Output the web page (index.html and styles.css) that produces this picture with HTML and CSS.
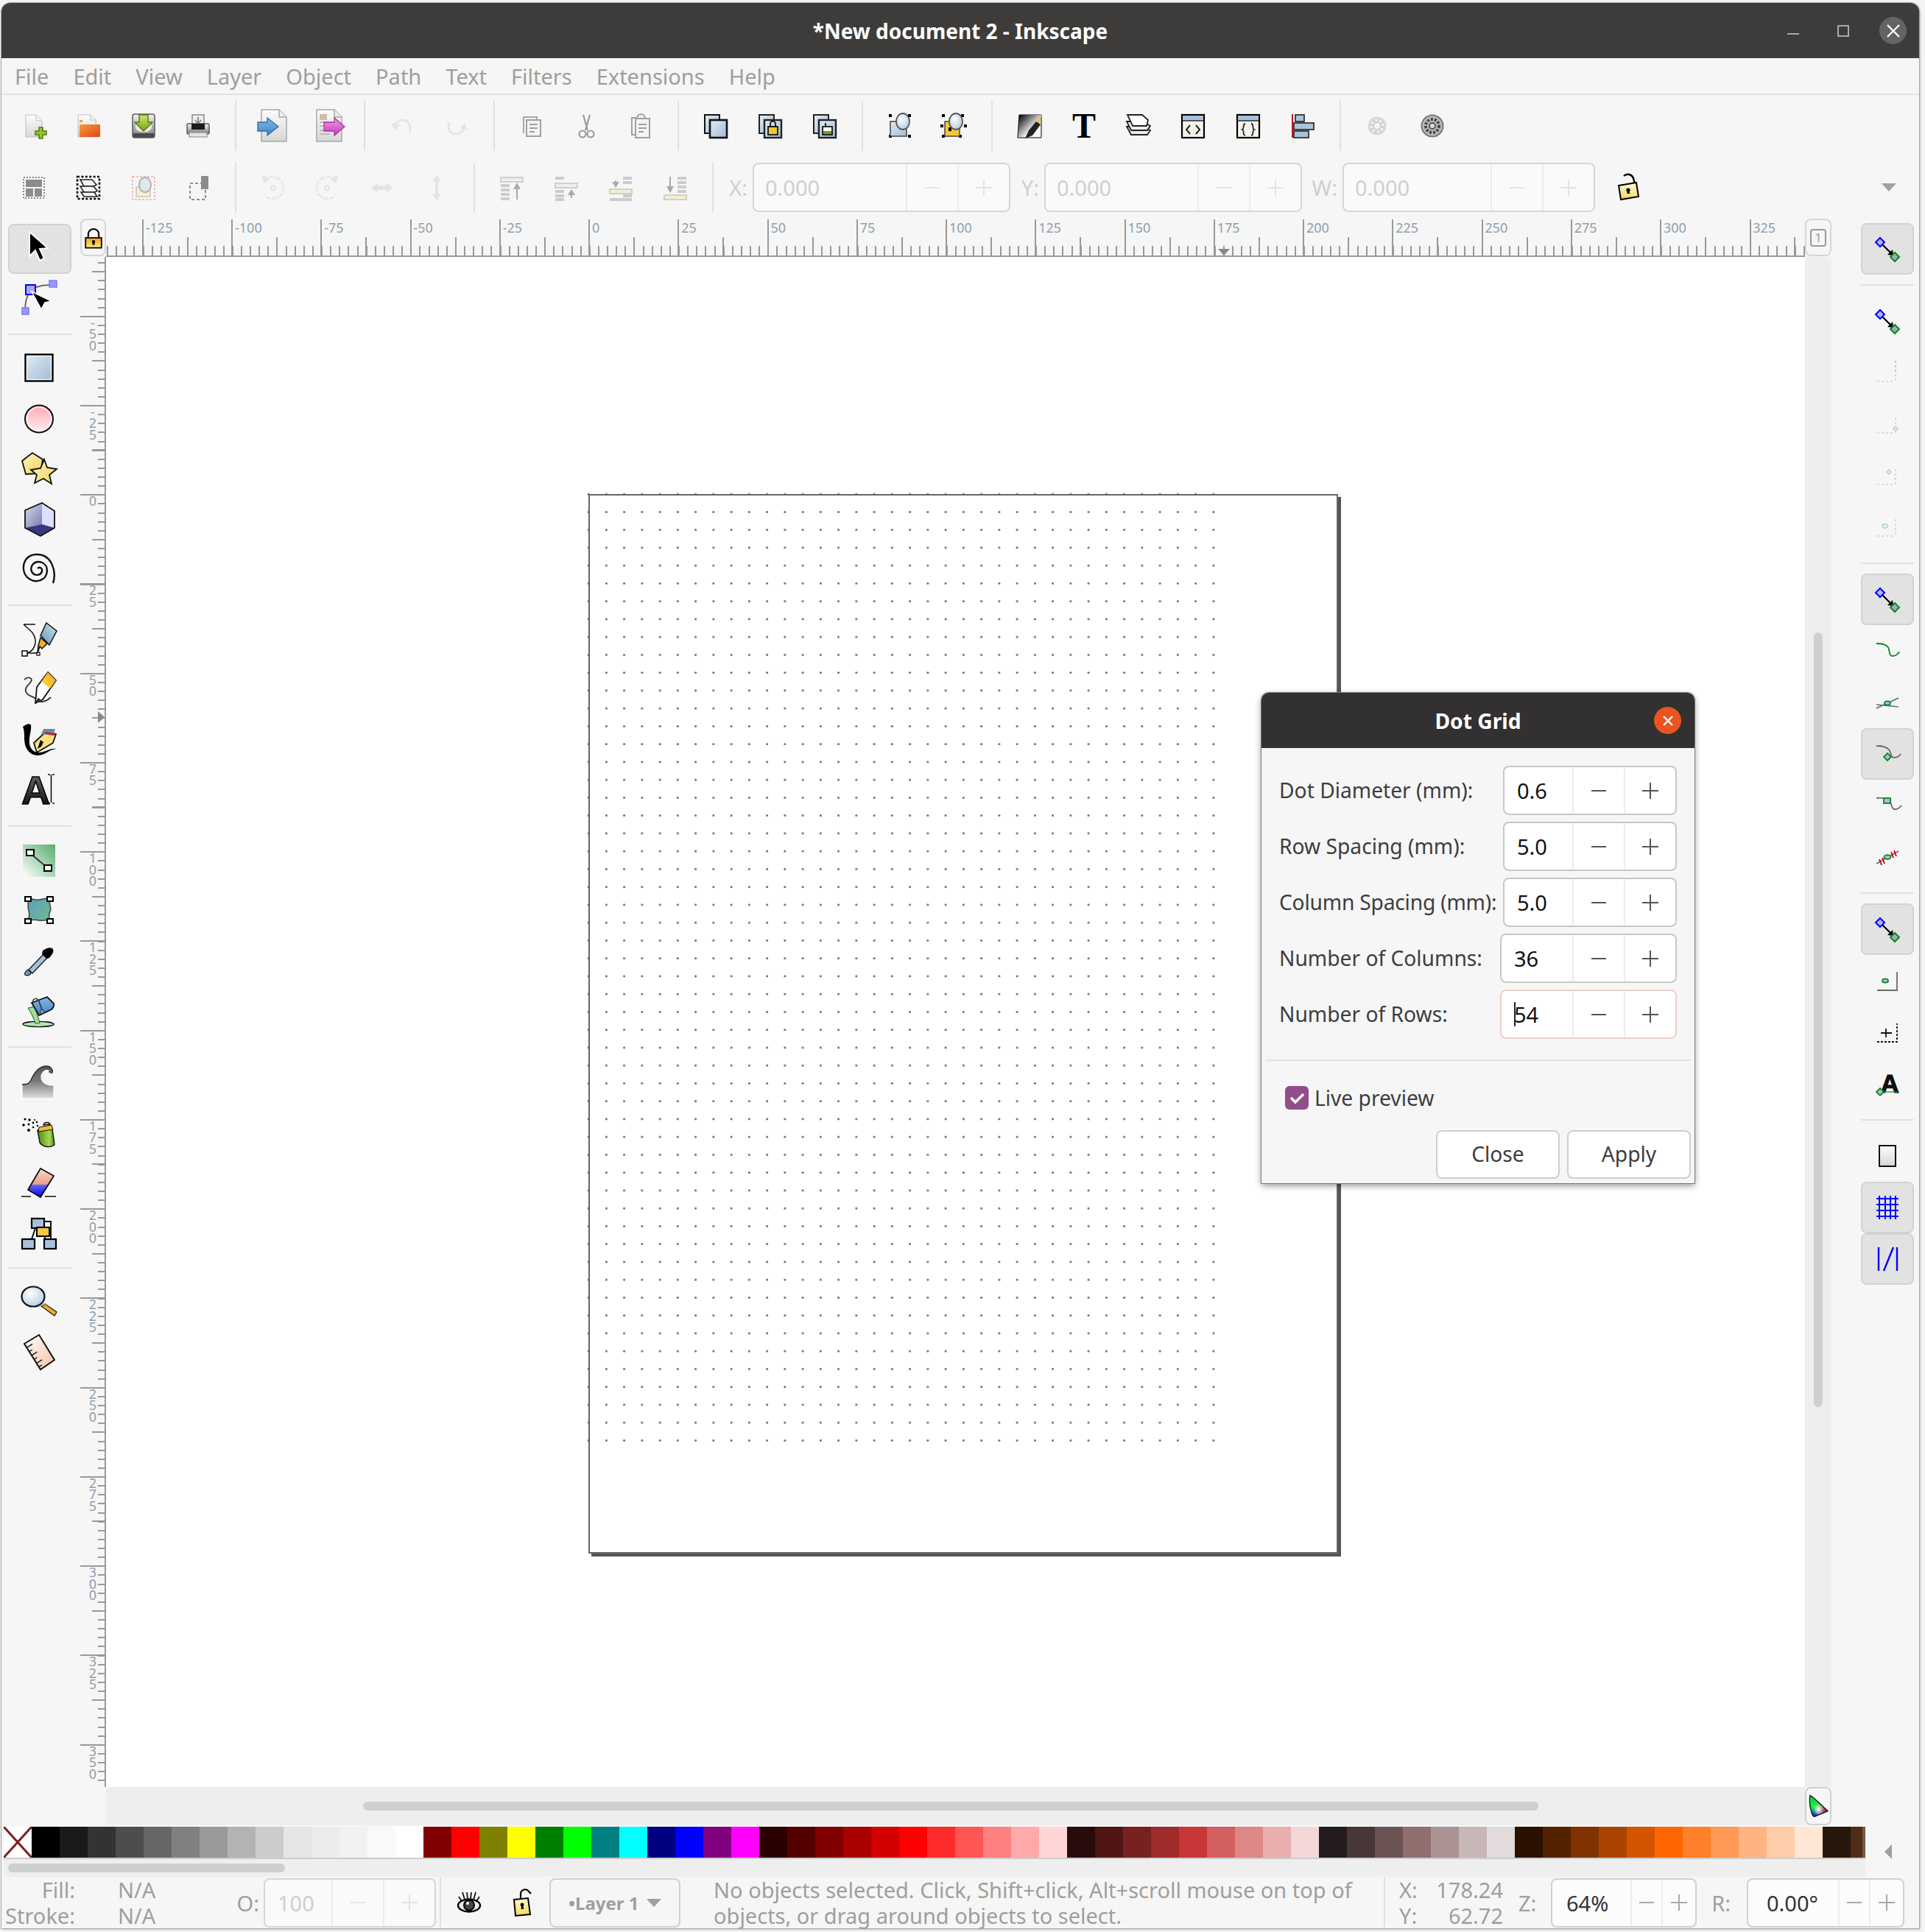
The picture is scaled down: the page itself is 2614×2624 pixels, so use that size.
FILE: index.html
```html
<!DOCTYPE html>
<html lang="en">
<head>
<meta charset="UTF-8">
<title>*New document 2 - Inkscape</title>
<link rel="stylesheet" href="styles.css">
</head>
<body>

<svg class="defs" aria-hidden="true">
  <defs>
    <linearGradient id="gPage" x1="0" y1="0" x2="0" y2="1"><stop offset="0" stop-color="#fdfdfd"/><stop offset="1" stop-color="#d6d6d6"/></linearGradient>
    <linearGradient id="gBlue" x1="0" y1="0" x2="1" y2="1"><stop offset="0" stop-color="#e2ebf3"/><stop offset="1" stop-color="#9fbcd5"/></linearGradient>
    <linearGradient id="gPink" x1="0" y1="0" x2="0" y2="1"><stop offset="0" stop-color="#ffa9b4"/><stop offset="1" stop-color="#ffeef0"/></linearGradient>
    <linearGradient id="gYel" x1="0" y1="0" x2="1" y2="1"><stop offset="0" stop-color="#fff6c4"/><stop offset="1" stop-color="#f2d256"/></linearGradient>
    <linearGradient id="gLock" x1="0" y1="0" x2="0" y2="1"><stop offset="0" stop-color="#f09a24"/><stop offset="1" stop-color="#fff27a"/></linearGradient>
    <linearGradient id="gLockOpen" x1="0" y1="0" x2="0" y2="1"><stop offset="0" stop-color="#fff9d0"/><stop offset="1" stop-color="#f4d860"/></linearGradient>
    <linearGradient id="gOrange" x1="0" y1="0" x2="1" y2="1"><stop offset="0" stop-color="#f59a3c"/><stop offset="1" stop-color="#e2451c"/></linearGradient>
    <linearGradient id="gPencil" x1="1" y1="0" x2="0" y2="1"><stop offset="0" stop-color="#f59a1c"/><stop offset="1" stop-color="#ffe44c"/></linearGradient>
    <linearGradient id="gLime" x1="0" y1="0" x2="0" y2="1"><stop offset="0" stop-color="#cfe86a"/><stop offset="1" stop-color="#6fa412"/></linearGradient>
    <linearGradient id="gDisk" x1="0" y1="0" x2="0" y2="1"><stop offset="0" stop-color="#f4f4f4"/><stop offset="1" stop-color="#7a7a7a"/></linearGradient>
    <linearGradient id="gArrBlue" x1="0" y1="0" x2="0" y2="1"><stop offset="0" stop-color="#86b9e6"/><stop offset="1" stop-color="#3f83c8"/></linearGradient>
    <linearGradient id="gNib" x1="1" y1="0" x2="0" y2="1"><stop offset="0" stop-color="#cfe6ef"/><stop offset="1" stop-color="#5f93b4"/></linearGradient>
    <linearGradient id="gArrPink" x1="0" y1="0" x2="0" y2="1"><stop offset="0" stop-color="#ee9be4"/><stop offset="1" stop-color="#c63cb8"/></linearGradient>
    <linearGradient id="gFade" x1="0" y1="0" x2="1" y2="1"><stop offset="0" stop-color="#000"/><stop offset=".6" stop-color="#eee"/><stop offset="1" stop-color="#fff"/></linearGradient>
    <linearGradient id="gGreen" x1="0" y1="1" x2="1" y2="0"><stop offset="0" stop-color="#fff"/><stop offset="1" stop-color="#55ad6c"/></linearGradient>
    <linearGradient id="gTeal" x1="0" y1="0" x2="1" y2="1"><stop offset="0" stop-color="#5f9fc0"/><stop offset="1" stop-color="#6fbb8c"/></linearGradient>
    <linearGradient id="gWave" x1="0" y1="0" x2="0" y2="1"><stop offset="0" stop-color="#555"/><stop offset=".45" stop-color="#777"/><stop offset="1" stop-color="#e0e0e0"/></linearGradient>
    <linearGradient id="gBox" x1="0" y1="0" x2="1" y2="1"><stop offset="0" stop-color="#d8d8f0"/><stop offset="1" stop-color="#7c7cb0"/></linearGradient>
    <linearGradient id="gSpray" x1="0" y1="0" x2="1" y2="0"><stop offset="0" stop-color="#4b8a0a"/><stop offset=".7" stop-color="#a9d85a"/><stop offset="1" stop-color="#4b8a0a"/></linearGradient>
    <linearGradient id="gErase" x1="0" y1="0" x2="0" y2="1"><stop offset="0" stop-color="#ffd9c4"/><stop offset=".55" stop-color="#e8a088"/><stop offset=".56" stop-color="#6a6aff"/><stop offset="1" stop-color="#0000e8"/></linearGradient>
    <linearGradient id="gFlesh" x1="0" y1="0" x2="1" y2="1"><stop offset="0" stop-color="#fff"/><stop offset="1" stop-color="#f4c0a4"/></linearGradient>
    <linearGradient id="gAlpha" x1="0" y1="0" x2="0" y2="1"><stop offset="0" stop-color="#777"/><stop offset="1" stop-color="#000"/></linearGradient>
    <linearGradient id="gWheel" x1="0" y1="0" x2="0" y2="1"><stop offset="0" stop-color="#10c840"/><stop offset=".55" stop-color="#20f040"/><stop offset="1" stop-color="#1010f0"/></linearGradient>
    <radialGradient id="gWheelR" cx="1" cy=".72" r=".7"><stop offset="0" stop-color="#ff0030"/><stop offset="1" stop-color="#ff0030" stop-opacity="0"/></radialGradient>
    <radialGradient id="gWheelW" cx=".5" cy=".66" r=".3"><stop offset="0" stop-color="#fff"/><stop offset="1" stop-color="#fff" stop-opacity="0"/></radialGradient>
    <radialGradient id="gLens" cx=".4" cy=".35" r=".8"><stop offset="0" stop-color="#fff"/><stop offset="1" stop-color="#a8c4dc"/></radialGradient>
    <pattern id="dotTile" width="24.25" height="24.25" patternUnits="userSpaceOnUse"><circle cx="12.125" cy="12.125" r="1.5" fill="#666"/></pattern>

    <symbol id="lockShut" viewBox="0 0 40 40" overflow="visible"><path d="M11 21v-7a9 9 0 0 1 18 0v7" fill="none" stroke="#000" stroke-width="2.6"/><rect x="6.5" y="20" width="27" height="17" fill="url(#gLock)" stroke="#000" stroke-width="2.2"/><circle cx="20" cy="26.5" r="2.6"/><path d="M18.6 27h2.8l.8 5h-4.4z"/></symbol>
    <symbol id="lockOpen" viewBox="0 0 40 40" overflow="visible"><path d="M15 4a8 8 0 0 1 13 3l2 8" fill="none" stroke="#000" stroke-width="2.4" transform="translate(1 0)"/><path d="M9 17l24-4 3 19-24 4z" fill="url(#gLockOpen)" stroke="#000" stroke-width="2"/><circle cx="22" cy="23" r="2.6"/><path d="M20.7 24h2.6l1 4h-4z"/></symbol>
    <symbol id="snapLine" viewBox="0 0 40 40" overflow="visible"><path d="M13 14l12 12" stroke="#000" stroke-width="2.2"/><path d="M27 21l1 8-8-1z"/><path d="M10 5l6 6-6 6-6-6z" fill="#b4b4f4" stroke="#0000ff" stroke-width="2"/><path d="M30 25l6 6-6 6-6-6z" fill="#9aa8cc" stroke="#0a8a14" stroke-width="2"/></symbol>
    <symbol id="sheet" viewBox="0 0 40 40" overflow="visible"><path d="M5-2h24l10 10v33H5z" fill="url(#gPage)" stroke="#a6a6a6" stroke-width="1.5"/><path d="M29-2V8h10" fill="#eee" stroke="#a6a6a6" stroke-width="1.5"/></symbol>
  </defs>
</svg>

<div class="window">

  <header class="titlebar">
    <span class="wintitle">*New document 2 - Inkscape</span>
    <div class="winbtns">
      <span class="wb-min"></span>
      <span class="wb-max"></span>
      <span class="wb-close"><svg class="wb-x" viewBox="0 0 18 18"><path d="M1 1l16 16M17 1L1 17" stroke="#fff" stroke-width="2.4"/></svg></span>
    </div>
  </header>

  <nav class="menubar">
    <span>File</span><span>Edit</span><span>View</span><span>Layer</span><span>Object</span><span>Path</span><span>Text</span><span>Filters</span><span>Extensions</span><span>Help</span>
  </nav>

  <div class="toolbar">
    <div class="tb"><svg class="ic" viewBox="0 0 40 40"><path d="M9 5h14l8 8v22H9z" fill="url(#gPage)" stroke="#c4c4c4" stroke-width="1.2"/><path d="M23 5v8h8" fill="#f2f2f2" stroke="#c4c4c4"/><path d="M27 22h5v5h5v5h-5v5h-5v-5h-5v-5h5z" fill="#9cc22e" stroke="#4f7a0e" stroke-width="1.5"/></svg></div>
    <div class="tb"><svg class="ic" viewBox="0 0 40 40"><path d="M6 5h17l7 7v23H6z" fill="url(#gPage)" stroke="#c4c4c4" stroke-width="1.2"/><path d="M23 5v7h7" fill="#f2f2f2" stroke="#c4c4c4"/><path d="M8 12h4v3H8z" fill="#f0a030"/><path d="M8 18h28v17H8z" fill="url(#gOrange)"/></svg></div>
    <div class="tb"><svg class="ic" viewBox="0 0 40 40"><rect x="5" y="4" width="30" height="32" rx="3" fill="url(#gDisk)" stroke="#5a5a5a" stroke-width="1.5"/><ellipse cx="20" cy="21" rx="12" ry="8" fill="#e6e6e6" stroke="#999"/><rect x="5.8" y="30" width="28.4" height="5.4" fill="#4a4a4a"/><path d="M14 5h12v10h6L20 27 8 15h6z" fill="url(#gLime)" stroke="#4f7a0e" stroke-width="1.4"/></svg></div>
    <div class="tb"><svg class="ic" viewBox="0 0 40 40"><path d="M12 5h16v14H12z" fill="#eee" stroke="#8a8a8a" stroke-width="1.5"/><path d="M20 8v8m-4-4l4 5 4-5" fill="none" stroke="#8a8a8a" stroke-width="2"/><rect x="5" y="17" width="30" height="14" rx="2" fill="url(#gDisk)" stroke="#555" stroke-width="1.4"/><rect x="11" y="17" width="18" height="8" fill="#1a1a1a"/><rect x="8" y="29" width="24" height="6" fill="#e4e4e4" stroke="#888"/><path d="M9 27h4" stroke="#6ab04c" stroke-width="2"/></svg></div>
    <div class="sep"></div>
    <div class="tb"><svg class="ic" viewBox="0 0 40 40"><use href="#sheet" width="40" height="40"/><path d="M0 15h13V9l15 12-15 12v-6H0z" fill="url(#gArrBlue)" stroke="#2a6cb0" stroke-width="1.3"/></svg></div>
    <div class="tb"><svg class="ic" viewBox="0 0 40 40"><use href="#sheet" width="40" height="40"/><path d="M9 4h10v8H9z" fill="#d6b8a8"/><path d="M9 15h20M9 20h14M9 26h14M9 31h14" stroke="#bcbcbc" stroke-width="2"/><path d="M15 15h14V9l14 12-14 12v-6H15z" fill="url(#gArrPink)" stroke="#b030a8" stroke-width="1.3"/></svg></div>
    <div class="sep"></div>
    <div class="tb"><svg class="ic" viewBox="0 0 40 40"><path d="M30 29c3-8-1-17-9-17-6 0-10 4-11 10" fill="none" stroke="#e4e4e4" stroke-width="2.6"/><path d="M5 16l5 10 7-7z" fill="#e4e4e4"/></svg></div>
    <div class="tb"><svg class="ic" viewBox="0 0 40 40"><path d="M10 15c-3 8 1 16 9 16 6 0 10-4 11-10" fill="none" stroke="#e4e4e4" stroke-width="2.6"/><path d="M35 26l-4-10-7 7z" fill="#e4e4e4"/></svg></div>
    <div class="sep"></div>
    <div class="tb"><svg class="ic" viewBox="0 0 40 40"><path d="M9 30V8h18v4" fill="none" stroke="#a8a8a8" stroke-width="2"/><rect x="13" y="12" width="19" height="22" fill="#f4f4f4" stroke="#a0a0a0" stroke-width="2"/><path d="M17 18h11M17 23h11M17 28h7" stroke="#a0a0a0" stroke-width="2"/></svg></div>
    <div class="tb"><svg class="ic" viewBox="0 0 40 40"><path d="M16 5l6 21M25 5l-6 21" stroke="#9a9a9a" stroke-width="2.2"/><circle cx="15" cy="31" r="4.5" fill="none" stroke="#9a9a9a" stroke-width="2.2"/><circle cx="26" cy="31" r="4.5" fill="none" stroke="#9a9a9a" stroke-width="2.2"/></svg></div>
    <div class="tb"><svg class="ic" viewBox="0 0 40 40"><path d="M14 9H8v23h5" fill="none" stroke="#a0a0a0" stroke-width="2"/><rect x="13" y="10" width="19" height="26" fill="#f4f4f4" stroke="#a0a0a0" stroke-width="2"/><path d="M15 10c0-8 11-8 11 0z" fill="#eee" stroke="#a0a0a0" stroke-width="2"/><path d="M17 18h11M17 23h11M17 28h7" stroke="#a0a0a0" stroke-width="2"/></svg></div>
    <div class="sep"></div>
    <div class="tb"><svg class="ic" viewBox="0 0 40 40"><rect x="5" y="5" width="20" height="25" fill="url(#gBlue)" stroke="#111" stroke-width="2"/><rect x="12" y="12" width="23" height="24" fill="url(#gBlue)" stroke="#111" stroke-width="2.6"/></svg></div>
    <div class="tb"><svg class="ic" viewBox="0 0 40 40"><rect x="5" y="5" width="20" height="25" fill="url(#gBlue)" stroke="#222" stroke-width="2"/><rect x="12" y="12" width="23" height="24" fill="url(#gBlue)" stroke="#222" stroke-width="2.4"/><path d="M20 21v-4a3.500 3.500 0 0 1 7 0v4" fill="none" stroke="#111" stroke-width="1.8"/><rect x="17" y="21" width="13" height="11" fill="#f4c432" stroke="#111" stroke-width="1.8"/></svg></div>
    <div class="tb"><svg class="ic" viewBox="0 0 40 40"><rect x="5" y="5" width="20" height="25" fill="url(#gBlue)" stroke="#222" stroke-width="2"/><rect x="12" y="12" width="23" height="24" fill="url(#gBlue)" stroke="#222" stroke-width="2.4"/><path d="M21 21v-5" stroke="#111" stroke-width="1.8"/><rect x="17" y="21" width="13" height="11" fill="#fff" stroke="#111" stroke-width="1.8"/><rect x="18" y="27" width="11" height="4" fill="#6fa412"/></svg></div>
    <div class="sep"></div>
    <div class="tb"><svg class="ic" viewBox="0 0 40 40"><path d="M5 4h4v4H5zM31 4h4v4h-4zM5 32h4v4H5zM31 32h4v4h-4z"/><rect x="7" y="14" width="22" height="20" fill="url(#gBlue)" stroke="#444" stroke-width="1.5"/><ellipse cx="24" cy="14" rx="9" ry="11" fill="url(#gLens)" stroke="#555" stroke-width="1.8"/></svg></div>
    <div class="tb"><svg class="ic" viewBox="0 0 40 40"><path d="M3 4h4v4H3zM29 4h4v4h-4zM3 32h4v4H3zM26 32h4v4h-4zM1 18h4v4H1zM33 18h4v4h-4z"/><rect x="7" y="14" width="20" height="20" fill="#f6c636" stroke="#444" stroke-width="1.5"/><rect x="12" y="22" width="4" height="5"/><ellipse cx="22" cy="14" rx="9" ry="11" fill="url(#gLens)" stroke="#555" stroke-width="1.8"/></svg></div>
    <div class="sep"></div>
    <div class="tb"><svg class="ic" viewBox="0 0 40 40"><path d="M6 5h30v31H4z" fill="url(#gFade)" stroke="#000" stroke-width="1"/><path d="M6 5h30L33 22 6 36z" fill="url(#gFade)"/><path d="M36 5l-3 14-5-1z" fill="#f4c020"/><path d="M29 14l6 4-11 15-10 4 5-11z" fill="#222"/></svg></div>
    <div class="tb"><svg class="ic" viewBox="0 0 40 40"><text class="ic-t" x="20" y="36">T</text></svg></div>
    <div class="tb"><svg class="ic" viewBox="0 0 40 40"><path d="M4 21h22l10 5-4 6H10z" fill="#eee" stroke="#222" stroke-width="1.8"/><path d="M4 14h22l10 6-4 6H10z" fill="#eee" stroke="#222" stroke-width="1.8"/><path d="M5 5h20l8 7-2 8H12z" fill="#fff" stroke="#222" stroke-width="1.8"/></svg></div>
    <div class="tb"><svg class="ic" viewBox="0 0 40 40"><rect x="5" y="5" width="30" height="31" fill="#f4f2ea" stroke="#000" stroke-width="2.2"/><rect x="6" y="6" width="28" height="7" fill="#a8c0d8"/><path d="M5 13h30" stroke="#000" stroke-width="1.2"/><path d="M16 19l-5 6 5 6M24 19l5 6-5 6" fill="none" stroke="#222" stroke-width="2"/></svg></div>
    <div class="tb"><svg class="ic" viewBox="0 0 40 40"><rect x="5" y="5" width="30" height="31" fill="#f4f2ea" stroke="#000" stroke-width="2.2"/><rect x="6" y="6" width="28" height="7" fill="#a8c0d8"/><path d="M5 13h30" stroke="#000" stroke-width="1.2"/><path d="M16 17c-4 0-1 7-4 8 3 1 0 8 4 8M24 17c4 0 1 7 4 8-3 1 0 8-4 8" fill="none" stroke="#222" stroke-width="1.8"/></svg></div>
    <div class="tb"><svg class="ic" viewBox="0 0 40 40"><rect x="5" y="4" width="2" height="32" fill="#b01c1c"/><rect x="10" y="5" width="12" height="9" fill="#a8c4dc" stroke="#333" stroke-width="1.8"/><rect x="8" y="16" width="27" height="9" fill="#a8c4dc" stroke="#333" stroke-width="1.8"/><rect x="8" y="27" width="20" height="9" fill="#a8c4dc" stroke="#333" stroke-width="1.8"/></svg></div>
    <div class="sep"></div>
    <div class="tb"><svg class="ic" viewBox="0 0 40 40"><circle cx="20" cy="20" r="9" fill="none" stroke="#d0d0d0" stroke-width="6" stroke-dasharray="4 3"/><circle cx="20" cy="20" r="11" fill="none" stroke="#d8d8d8" stroke-width="3"/><circle cx="20" cy="20" r="5" fill="#f4f4f4" stroke="#ccc" stroke-width="2"/></svg></div>
    <div class="tb"><svg class="ic" viewBox="0 0 40 40"><circle cx="20" cy="20" r="14.500" fill="#bbb" stroke="#777" stroke-width="2"/><circle cx="20" cy="20" r="9" fill="none" stroke="#444" stroke-width="4" stroke-dasharray="3 2"/><circle cx="20" cy="20" r="4" fill="#ddd" stroke="#555" stroke-width="2"/></svg></div>
  </div>

  <div class="toolbar ctrl">
    <div class="tb"><svg class="ic" viewBox="0 0 40 40"><rect x="6" y="6" width="28" height="28" fill="none" stroke="#888" stroke-width="2" stroke-dasharray="2 2"/><rect x="9" y="9" width="22" height="10" fill="#8c8c8c"/><rect x="9" y="21" width="10" height="11" fill="#8c8c8c"/><rect x="21" y="21" width="10" height="11" fill="#8c8c8c"/></svg></div>
    <div class="tb"><svg class="ic" viewBox="0 0 40 40"><rect x="5" y="5" width="30" height="30" fill="none" stroke="#000" stroke-width="2.6" stroke-dasharray="3 2.400"/><path d="M9 9h16l6 7-4 2H14z" fill="#f4f4f4" stroke="#222" stroke-width="1.6"/><path d="M9 18h18l5 6-3 2H14z" fill="#f4f4f4" stroke="#222" stroke-width="1.6"/><path d="M10 26h18l4 6H14z" fill="#f4f4f4" stroke="#222" stroke-width="1.6"/></svg></div>
    <div class="tb"><svg class="ic" viewBox="0 0 40 40"><rect x="5" y="5" width="30" height="31" fill="none" stroke="#efbcbc" stroke-width="2" stroke-dasharray="3 2"/><rect x="10" y="19" width="19" height="13" fill="#f6eed2" stroke="#c8c8c8" stroke-width="1.5"/><ellipse cx="22" cy="16" rx="8" ry="10" fill="#dfe6ec" stroke="#b0b0b0" stroke-width="1.8"/></svg></div>
    <div class="tb"><svg class="ic" viewBox="0 0 40 40"><path d="M27 14H9v22h21V17" fill="none" stroke="#8c8c8c" stroke-width="2" stroke-dasharray="4 3"/><rect x="24" y="4" width="10" height="18" fill="#8c8c8c"/></svg></div>
    <div class="sep"></div>
    <div class="tb"><svg class="ic" viewBox="0 0 40 40"><path d="M10 11a15 15 0 1 1 0 18" fill="none" stroke="#e4e4e4" stroke-width="2.2" stroke-dasharray="7 2" transform="matrix(1 0 0 1 -2 0)"/><circle cx="21" cy="20" r="3" fill="none" stroke="#e4e4e4" stroke-width="2"/><path d="M6 3l2 11 9-6z" fill="#e4e4e4"/></svg></div>
    <div class="tb"><svg class="ic" viewBox="0 0 40 40"><path d="M30 11a15 15 0 1 0 0 18" fill="none" stroke="#e4e4e4" stroke-width="2.2" stroke-dasharray="7 2" transform="translate(2 0)"/><circle cx="19" cy="20" r="3" fill="none" stroke="#e4e4e4" stroke-width="2"/><path d="M34 3l-2 11-9-6z" fill="#e4e4e4"/></svg></div>
    <div class="tb"><svg class="ic" viewBox="0 0 40 40"><path d="M5 20l9-7v4h12v-4l9 7-9 7v-4H14v4z" fill="#e4e4e4"/></svg></div>
    <div class="tb"><svg class="ic" viewBox="0 0 40 40"><path d="M20 2l6 10h-4v16h4L20 38 14 28h4V12h-4z" fill="#e4e4e4"/></svg></div>
    <div class="sep"></div>
    <div class="tb"><svg class="ic" viewBox="0 0 40 40"><rect x="5" y="6" width="30" height="6" fill="#eee" stroke="#c4c4c4" stroke-width="1.5"/><path d="M5 17h12M5 23h12M5 29h12M5 35h12" stroke="#ccc" stroke-width="4"/><path d="M27 16v20" stroke="#aaa" stroke-width="2"/><path d="M27 13l-5 9h10z" fill="#aaa"/></svg></div>
    <div class="tb"><svg class="ic" viewBox="0 0 40 40"><rect x="5" y="14" width="30" height="6" fill="#eee" stroke="#c4c4c4" stroke-width="1.5"/><path d="M5 7h12M5 25h12M5 31h12M5 36h12" stroke="#ccc" stroke-width="4"/><path d="M27 24v10" stroke="#aaa" stroke-width="2"/><path d="M27 22l-5 8h10z" fill="#aaa"/></svg></div>
    <div class="tb"><svg class="ic" viewBox="0 0 40 40"><path d="M23 7h12M23 13h12M23 31h12M5 36h30" stroke="#ccc" stroke-width="4"/><rect x="5" y="22" width="30" height="6" fill="#f6eed2" stroke="#c4c4c4" stroke-width="1.5"/><path d="M13 10v8" stroke="#aaa" stroke-width="2"/><path d="M13 20l-5-8h10z" fill="#aaa"/></svg></div>
    <div class="tb"><svg class="ic" viewBox="0 0 40 40"><path d="M23 7h12M23 13h12M23 19h12M23 25h12" stroke="#ccc" stroke-width="4"/><rect x="5" y="30" width="30" height="6" fill="#f6eed2" stroke="#c4c4c4" stroke-width="1.5"/><path d="M13 5v18" stroke="#aaa" stroke-width="2"/><path d="M13 27l-5-9h10z" fill="#aaa"/></svg></div>
    <div class="sep"></div>
    <span class="lbl lbl-x off">X:</span>
    <div class="spin wide off"><span class="val">0.000</span><span class="bt minus"></span><span class="bt plus"></span></div>
    <span class="lbl lbl-y off">Y:</span>
    <div class="spin wide off"><span class="val">0.000</span><span class="bt minus"></span><span class="bt plus"></span></div>
    <span class="lbl lbl-w off">W:</span>
    <div class="spin wide w-box off"><span class="val">0.000</span><span class="bt minus"></span><span class="bt plus"></span></div>
    <svg class="ic lock-aff" viewBox="0 0 40 40"><use href="#lockOpen" width="40" height="40"/></svg>
    <span class="more"></span>
  </div>

  <div class="workspace">

    <aside class="toolbox">
      <div class="tool on"><svg class="ic" viewBox="0 0 40 40"><path d="M7-3v33l8-8 6 14 6-3-6-13 11-1z" stroke="#fff" stroke-width="2"/></svg></div>
      <div class="tool"><svg class="ic" viewBox="0 0 40 40"><path d="M1 36C1 15 8 6 16 3c6-2 12-3 18-3" fill="none" stroke="#6a6a6a" stroke-width="2"/><rect x="2" y="0" width="13" height="13" fill="#a8a8f0" stroke="#0000f0" stroke-width="2"/><rect x="34" y="-6" width="10" height="9" fill="#9a9af4" stroke="#7a7aff" stroke-width="1.5"/><rect x="-3" y="31" width="9" height="9" fill="#9a9af4" stroke="#7a7aff" stroke-width="1.5"/><path d="M10 9l27 13-9 2-5 9z" stroke="#fff" stroke-width="1.5"/></svg></div>
      <div class="tool-sep"></div>
      <div class="tool"><svg class="ic" viewBox="0 0 40 40"><rect x="1.500" y="1.500" width="37" height="36" fill="url(#gBlue)" stroke="#000" stroke-width="2.4"/><rect x="3.500" y="3.500" width="33" height="32" fill="none" stroke="#fff" stroke-width="1.2"/></svg></div>
      <div class="tool"><svg class="ic" viewBox="0 0 40 40"><ellipse cx="20" cy="20" rx="19" ry="18.500" fill="url(#gPink)" stroke="#111" stroke-width="2"/><ellipse cx="20" cy="20" rx="16.500" ry="16" fill="none" stroke="#fff" stroke-width="1.2"/></svg></div>
      <div class="tool"><svg class="ic" viewBox="0 0 40 40"><path d="M-3 8l14-11 14 9-3 19-20 1z" fill="url(#gYel)" stroke="#111" stroke-width="1.8"/><path d="M27 6l4 11 13 2-10 8 3 12-11-7-12 6 3-11-8-7 13-2z" fill="url(#gYel)" stroke="#111" stroke-width="1.8"/></svg></div>
      <div class="tool"><svg class="ic" viewBox="0 0 40 40"><path d="M1 6L24-4v29L1 30z" fill="url(#gBox)"/><path d="M24-4l17 11v23l-17-5z" fill="#dedeff"/><path d="M1 30l23-5 17 5-19 11z" fill="#383880"/><path d="M1 6L24-4l17 11v23L22 41 1 30z" fill="none" stroke="#111" stroke-width="1.8"/></svg></div>
      <div class="tool"><svg class="ic" viewBox="0 0 40 40"><path d="M39 37C44 22 38-2 17-2 4-2-2 8-1 18 0 30 12 37 22 33 33 29 34 13 24 9 14 5 7 14 10 21 13 28 22 27 24 21 25 17 21 14 18 17" fill="none" stroke="#111" stroke-width="2.4"/></svg></div>
      <div class="tool-sep"></div>
      <div class="tool"><svg class="ic" viewBox="0 0 40 40"><path d="M-1-1h16M-1-1C6 6 14 10 15 20c1 8-4 16-11 18H19" fill="none" stroke="#111" stroke-width="1.5"/><rect x="-3" y="35" width="7" height="7" fill="#fff" stroke="#000" stroke-width="1.5"/><rect x="17" y="37" width="4" height="4" fill="#fff" stroke="#000" stroke-width="1.2"/><path d="M30-3l14 11-10 19-12-13z" fill="url(#gNib)" stroke="#111" stroke-width="1.5"/><path d="M22 17l9 8-7 7-3-3-3 9 1-10z" fill="#f0b030" stroke="#111" stroke-width="1.5"/></svg></div>
      <div class="tool"><svg class="ic" viewBox="0 0 40 40"><path d="M0 5c6-5 12-2 9 3-4 5-10 9-6 15 2 5 10 4 13 9 3 5 13 4 20-3" fill="none" stroke="#333" stroke-width="1.800"/><path d="M32-5l11 11-18 26-10 5 2-22z" fill="#fff" stroke="#111" stroke-width="1.8"/><path d="M32-5l11 11-8 11-12-9z" fill="url(#gPencil)"/><path d="M19 30l3 2-7 4z"/></svg></div>
      <div class="tool"><svg class="ic" viewBox="0 0 40 40"><path d="M-2 0c5-4 10-5 11-2 1 8-3 14-2 25 1 6 5 12 12 12 9 0 17-7 25-5-9 0-16 9-25 9C6 39 0 28 0 16c0-6 0-12-2-16z"/><path d="M30-1l13 4-4 12-22 13-4-13z" fill="#fce080" stroke="#111" stroke-width="1.8" transform="translate(0 7)"/><path d="M26 3l16 0-3 9-16-2z" fill="#6a8ca8"/><path d="M28 7l14 2-1 3-14-3z" fill="#d01c1c"/><path d="M22 18l4 3-3 6-5 3z"/></svg></div>
      <div class="tool"><svg class="ic" viewBox="0 0 40 40"><text class="ic-a" x="-4" y="37" fill="url(#gAlpha)">A</text><path d="M32-3h3M38-3h3M36.500-3v38M32 36h3M38 36h3" fill="none" stroke="#111" stroke-width="1.6"/></svg></div>
      <div class="tool-sep"></div>
      <div class="tool"><svg class="ic" viewBox="0 0 40 40"><rect x="-2" y="-2" width="44" height="44" fill="url(#gGreen)"/><path d="M8 10l24 20" stroke="#333" stroke-width="1.8"/><rect x="3" y="5" width="10" height="8" fill="#fff" stroke="#000" stroke-width="2"/><rect x="27" y="26" width="10" height="8" fill="#fff" stroke="#000" stroke-width="2"/></svg></div>
      <div class="tool"><svg class="ic" viewBox="0 0 40 40"><path d="M5 3c4-2 8 2 15 1s10-3 15-1c-3 6 3 12 0 17s-1 8 0 13c-5-3-10 0-15-1s-11-1-15 1c1-5 3-9 1-14S6 8 5 3z" fill="url(#gTeal)" stroke="#444" stroke-width="1.5"/><rect x="1" y="0" width="8" height="6" fill="#fff" stroke="#000" stroke-width="2"/><rect x="31" y="0" width="8" height="6" fill="#fff" stroke="#000" stroke-width="2"/><rect x="1" y="30" width="8" height="6" fill="#fff" stroke="#000" stroke-width="2"/><rect x="31" y="30" width="8" height="6" fill="#fff" stroke="#000" stroke-width="2"/></svg></div>
      <div class="tool"><svg class="ic" viewBox="0 0 40 40"><path d="M6 30L26 9l5 5-20 21z" fill="#a8c0dc" stroke="#222" stroke-width="1.5"/><path d="M25 4c5-3 9-5 13-3 3 3 1 7-4 13l-4 1-6-6z"/><path d="M5 30c-3 2-5 5-4 7 3 2 8 0 8-3z" fill="#7f9cb8" stroke="#222" stroke-width="1.3"/></svg></div>
      <div class="tool"><svg class="ic" viewBox="0 0 40 40"><ellipse cx="19" cy="36" rx="21" ry="3.600" fill="#b4e4b0" stroke="#111" stroke-width="1.4"/><path d="M5 14c4 6 8 14 10 21 2 0 5 0 6-1L14 12z" fill="#a4dca0" stroke="#1a5a20"/><path d="M10 7l21-8 9 9c1 3-1 6-3 8l-17 8z" fill="url(#gArrBlue)" stroke="#111" stroke-width="1.8"/><path d="M12 8c-2-6 5-10 8-3l5 15" fill="none" stroke="#333" stroke-width="1.6"/><circle cx="24" cy="19" r="2.600" fill="#8aa" stroke="#333"/></svg></div>
      <div class="tool-sep"></div>
      <div class="tool"><svg class="ic" viewBox="0 0 40 40"><path d="M-3 24c6 0 9 0 12-6 4-9 11-19 21-19 7 0 10 7 7 10-3 1-6-2-4-4-5-2-10 3-10 9 0 7 7 11 17 11v18H-3z" fill="url(#gWave)" stroke="#fff" stroke-width="1.2"/><path d="M-3 24c6 0 9 0 12-6 4-9 11-19 21-19 7 0 10 7 7 10" fill="none" stroke="#222" stroke-width="1.5"/></svg></div>
      <div class="tool"><svg class="ic" viewBox="0 0 40 40"><path d="M18 17l20-2 3 22c-8 5-16 2-20-3z" fill="url(#gSpray)" stroke="#111" stroke-width="1.4"/><path d="M20 13l17-3 2 6-20 3z" fill="#f0c030" stroke="#111" stroke-width="1"/><path d="M26 10c1-4 7-5 9-1z" fill="#f2f2f2" stroke="#111" stroke-width="1.500"/><g><circle cx="1" cy="2" r="1.500"/><circle cx="7" cy="3" r="1.700"/><circle cx="-1" cy="10" r="1.800"/><circle cx="6" cy="9" r="1.500"/><circle cx="12" cy="7" r="1.400"/><circle cx="17" cy="6" r="1.300"/><circle cx="12" cy="13" r="1.300"/><circle cx="18" cy="11" r="1.200"/><circle cx="6" cy="17" r="2"/><circle cx="14" cy="3" r="1"/></g></svg></div>
      <div class="tool"><svg class="ic" viewBox="0 0 40 40"><path d="M24-2l18 10-18 29-17-10z" fill="url(#gErase)" stroke="#111" stroke-width="1.8" transform="translate(-2 2)"/><path d="M-4 38h13M28 38h15" stroke="#111" stroke-width="1.6"/></svg></div>
      <div class="tool"><svg class="ic" viewBox="0 0 40 40"><path d="M10 28l5-15M28 4h8v24M28 24v4" fill="none" stroke="#111" stroke-width="2"/><rect x="10" y="0" width="17" height="13" fill="#a8c0dc" stroke="#000" stroke-width="2.2"/><rect x="17" y="12" width="17" height="12" fill="#f4c844" stroke="#000" stroke-width="2"/><rect x="-3" y="28" width="17" height="13" fill="#a8c0dc" stroke="#000" stroke-width="2.2"/><rect x="27" y="28" width="16" height="13" fill="#a8c0dc" stroke="#000" stroke-width="2.2"/></svg></div>
      <div class="tool-sep"></div>
      <div class="tool"><svg class="ic" viewBox="0 0 40 40"><path d="M23 25l5-3 16 11-3 5z" fill="#f0b020" stroke="#222" stroke-width="1.3"/><path d="M24 24l4-3 3 2-5 3z" fill="#888"/><ellipse cx="12" cy="12" rx="15.500" ry="13.500" fill="url(#gLens)" stroke="#111" stroke-width="2.2"/></svg></div>
      <div class="tool"><svg class="ic" viewBox="0 0 40 40"><path d="M0 7L20-5l21 34-19 13z" fill="url(#gFlesh)" stroke="#111" stroke-width="2"/><path d="M3.300 12.300l7.600-4.800M6.600 17.700l4.200-2.600M9.900 23l7.600-4.800M13.200 28.300l4.200-2.600M16.500 33.600l7.600-4.800M19.800 38.400l4.200-2.600" stroke="#222" stroke-width="1.500"/></svg></div>
    </aside>

    <main class="center">
      <div class="corner corner-lock"><svg class="lock-sm" viewBox="0 0 40 40"><use href="#lockShut" width="40" height="40"/></svg></div>
      <div class="hruler">
        <span>-125</span><span>-100</span><span>-75</span><span>-50</span><span>-25</span><span>0</span><span>25</span><span>50</span><span>75</span><span>100</span><span>125</span><span>150</span><span>175</span><span>200</span><span>225</span><span>250</span><span>275</span><span>300</span><span>325</span>
        <i class="hmark"></i>
      </div>
      <div class="corner corner-one"><span class="one">1</span></div>

      <div class="vruler">
        <div>-&#10;5&#10;0</div>
        <div>-&#10;2&#10;5</div>
        <div>0</div>
        <div>2&#10;5</div>
        <div>5&#10;0</div>
        <div>7&#10;5</div>
        <div>1&#10;0&#10;0</div>
        <div>1&#10;2&#10;5</div>
        <div>1&#10;5&#10;0</div>
        <div>1&#10;7&#10;5</div>
        <div>2&#10;0&#10;0</div>
        <div>2&#10;2&#10;5</div>
        <div>2&#10;5&#10;0</div>
        <div>2&#10;7&#10;5</div>
        <div>3&#10;0&#10;0</div>
        <div>3&#10;2&#10;5</div>
        <div>3&#10;5&#10;0</div>
        <i class="vmark"></i>
      </div>
      <div class="canvas">
        <div class="page"></div>
        <svg class="dots" width="873" height="1310"><rect width="873" height="1310" fill="url(#dotTile)"/></svg>
      </div>
      <div class="vscroll"><div class="vthumb"></div></div>

      <div class="hscroll"><div class="hthumb"></div></div>
      <div class="cms"><svg class="wheel" viewBox="0 0 30 32"><path d="M3 1c6 3 14 12 25 22L9 31c-4 0-8-20-6-30z" fill="url(#gWheel)"/><path d="M3 1c6 3 14 12 25 22L9 31c-4 0-8-20-6-30z" fill="url(#gWheelR)"/><path d="M3 1c6 3 14 12 25 22L9 31c-4 0-8-20-6-30z" fill="url(#gWheelW)"/><path d="M3 1c6 3 14 12 25 22L9 31c-4 0-8-20-6-30z" fill="none" stroke="#000" stroke-width="1.2"/></svg></div>
    </main>

    <aside class="snapbar">
      <div class="snap on"><svg class="ic" viewBox="0 0 40 40"><use href="#snapLine" width="40" height="40"/></svg></div>
      <div class="snap-sep"></div>
      <div class="snap"><svg class="ic" viewBox="0 0 40 40"><use href="#snapLine" width="40" height="40"/></svg></div>
      <div class="snap"><svg class="ic" viewBox="0 0 40 40"><path d="M31 4v3M31 10v3M31 16v3" stroke="#a8d8a8" stroke-width="2"/><path d="M6 32h3M12 32h3M18 32h3M24 32h3M31 22v3M31 28v3" stroke="#cfcfcf" stroke-width="1.5"/></svg></div>
      <div class="snap"><svg class="ic" viewBox="0 0 40 40"><path d="M6 32h3M12 32h3M18 32h3M24 32h3M31 11v3M31 17v3M31 23v3M31 29v3" stroke="#cfcfcf" stroke-width="1.5"/><path d="M28 26l3-3 3 3-3 3z" fill="#eef" stroke="#a8d8a8" stroke-width="1.3"/></svg></div>
      <div class="snap"><svg class="ic" viewBox="0 0 40 40"><path d="M6 32h3M12 32h3M18 32h3M24 32h3M31 11v3M31 17v3M31 23v3M31 29v3" stroke="#cfcfcf" stroke-width="1.5"/><path d="M19 15l3-3 3 3-3 3z" fill="#eef" stroke="#a8d8a8" stroke-width="1.3"/></svg></div>
      <div class="snap"><svg class="ic" viewBox="0 0 40 40"><path d="M6 32h3M12 32h3M18 32h3M24 32h3M31 9v3M31 15v3M31 21v3M31 27v3" stroke="#cfcfcf" stroke-width="1.5"/><rect x="13" y="16" width="7" height="5" rx="2" fill="#eef" stroke="#a8d8a8" stroke-width="1.3"/></svg></div>
      <div class="snap-sep"></div>
      <div class="snap on"><svg class="ic" viewBox="0 0 40 40"><use href="#snapLine" width="40" height="40"/></svg></div>
      <div class="snap"><svg class="ic" viewBox="0 0 40 40"><path d="M5 10c10 0 16 3 17 8 1 5 1 9 5 9s8-3 9-6" fill="none" stroke="#0a8a14" stroke-width="1.8"/></svg></div>
      <div class="snap"><svg class="ic" viewBox="0 0 40 40"><path d="M5 29l30-14M5 24l30 3" fill="none" stroke="#6a6a6a" stroke-width="1.6" transform="translate(0 -1)"/><ellipse cx="20" cy="21" rx="4" ry="2.600" fill="#b4b4f4" stroke="#0a8a14" stroke-width="1.800"/></svg></div>
      <div class="snap on"><svg class="ic" viewBox="0 0 40 40"><path d="M5 9c10 0 17 2 19 9 1 5 3 7 5 7 4 0 7-2 9-5" fill="none" stroke="#6a6a6a" stroke-width="1.800"/><path d="M20 19l5 5-5 5-5-5z" fill="#b4b4f4" stroke="#0a8a14" stroke-width="1.800"/></svg></div>
      <div class="snap"><svg class="ic" viewBox="0 0 40 40"><path d="M5 10c5-1 12 0 18 2 2 5 3 15 9 13 3 0 5-3 7-5" fill="none" stroke="#6a6a6a" stroke-width="1.800"/><rect x="15" y="10" width="9" height="7" fill="#b4b4f4" stroke="#0a8a14" stroke-width="1.800"/></svg></div>
      <div class="snap"><svg class="ic" viewBox="0 0 40 40"><path d="M5 29L35 12" stroke="#6a6a6a" stroke-width="1.800"/><path d="M9 23l3 8M13 21l3 8M25 13l3 8M29 11l3 8" stroke="#c80000" stroke-width="1.800"/><ellipse cx="20" cy="20" rx="4.500" ry="2.800" fill="#b4b4f4" stroke="#0a8a14" stroke-width="1.800"/></svg></div>
      <div class="snap-sep"></div>
      <div class="snap on"><svg class="ic" viewBox="0 0 40 40"><use href="#snapLine" width="40" height="40"/></svg></div>
      <div class="snap"><svg class="ic" viewBox="0 0 40 40"><path d="M6 33h27V8" fill="none" stroke="#6a6a6a" stroke-width="1.800"/><ellipse cx="17" cy="20" rx="4" ry="2.600" fill="#b4b4f4" stroke="#0a8a14" stroke-width="1.800"/></svg></div>
      <div class="snap"><svg class="ic" viewBox="0 0 40 40"><path d="M6 33h27V8" fill="none" stroke="#111" stroke-width="1.800" stroke-dasharray="3 2"/><path d="M11 21h15M18 15v12" stroke="#111" stroke-width="1.800"/></svg></div>
      <div class="snap"><svg class="ic" viewBox="0 0 40 40"><text class="ic-a-sm" x="10.500" y="32">A</text><path d="M10 31h26" stroke="#0a8a14" stroke-width="1.200"/><path d="M10 26l5 5-5 5-5-5z" fill="#b4b4f4" stroke="#0a8a14" stroke-width="1.800"/></svg></div>
      <div class="snap-sep"></div>
      <div class="snap"><svg class="ic" viewBox="0 0 40 40"><rect x="9" y="6" width="22" height="28" fill="url(#gPage)" stroke="#111" stroke-width="2"/></svg></div>
      <div class="snap on"><svg class="ic" viewBox="0 0 40 40"><path d="M5 8h30M5 16h30M5 24h30M5 32h30M9 4v32M17 4v32M24 4v32M31 4v32" stroke="#0000ff" stroke-width="2"/></svg></div>
      <div class="snap on"><svg class="ic" viewBox="0 0 40 40"><path d="M8 4v32M33 4v32M15 36L28 4" stroke="#0000ff" stroke-width="2.400"/></svg></div>
    </aside>
  </div>

  <div class="palette-row">
    <div class="palette-wrap">
      <div class="swatches">
        <div class="sw sw-none"><svg class="sw-x" viewBox="0 0 38 42" preserveAspectRatio="none"><path d="M0 0l38 42M38 0L0 42" stroke="#7a2020" stroke-width="3"/></svg></div>
        <div class="sw" style="background:#000"></div><div class="sw" style="background:#1a1a1a"></div><div class="sw" style="background:#333"></div><div class="sw" style="background:#4d4d4d"></div><div class="sw" style="background:#666"></div><div class="sw" style="background:#808080"></div><div class="sw" style="background:#999"></div><div class="sw" style="background:#b3b3b3"></div><div class="sw" style="background:#ccc"></div><div class="sw" style="background:#e6e6e6"></div><div class="sw" style="background:#ececec"></div><div class="sw" style="background:#f2f2f2"></div><div class="sw" style="background:#f9f9f9"></div><div class="sw" style="background:#fff"></div>
        <div class="sw" style="background:#800000"></div><div class="sw" style="background:#f00"></div><div class="sw" style="background:#808000"></div><div class="sw" style="background:#ff0"></div><div class="sw" style="background:#008000"></div><div class="sw" style="background:#0f0"></div><div class="sw" style="background:#008080"></div><div class="sw" style="background:#0ff"></div><div class="sw" style="background:#000080"></div><div class="sw" style="background:#00f"></div><div class="sw" style="background:#800080"></div><div class="sw" style="background:#f0f"></div>
        <div class="sw" style="background:#2b0000"></div><div class="sw" style="background:#500"></div><div class="sw" style="background:#800000"></div><div class="sw" style="background:#a00"></div><div class="sw" style="background:#d40000"></div><div class="sw" style="background:#f00"></div><div class="sw" style="background:#ff2a2a"></div><div class="sw" style="background:#f55"></div><div class="sw" style="background:#ff8080"></div><div class="sw" style="background:#faa"></div><div class="sw" style="background:#ffd5d5"></div>
        <div class="sw" style="background:#280b0b"></div><div class="sw" style="background:#501616"></div><div class="sw" style="background:#782121"></div><div class="sw" style="background:#a02c2c"></div><div class="sw" style="background:#c83737"></div><div class="sw" style="background:#d35f5f"></div><div class="sw" style="background:#de8787"></div><div class="sw" style="background:#e9afaf"></div><div class="sw" style="background:#f4d7d7"></div>
        <div class="sw" style="background:#241c1c"></div><div class="sw" style="background:#483737"></div><div class="sw" style="background:#6c5353"></div><div class="sw" style="background:#916f6f"></div><div class="sw" style="background:#ac9393"></div><div class="sw" style="background:#c8b7b7"></div><div class="sw" style="background:#e3dbdb"></div>
        <div class="sw" style="background:#2b1100"></div><div class="sw" style="background:#520"></div><div class="sw" style="background:#803300"></div><div class="sw" style="background:#a40"></div><div class="sw" style="background:#d45500"></div><div class="sw" style="background:#f60"></div><div class="sw" style="background:#ff7f2a"></div><div class="sw" style="background:#f95"></div><div class="sw" style="background:#ffb380"></div><div class="sw" style="background:#fca"></div><div class="sw" style="background:#ffe6d5"></div>
        <div class="sw" style="background:#28170b"></div><div class="sw sw-short" style="background:#502d16"></div><div class="sw sw-tail" style="background:#785a40"></div>
      </div>
      <div class="pal-scroll"><div class="pal-thumb"></div></div>
    </div>
    <span class="pal-arrow"></span>
  </div>

  <footer class="status">
    <div class="fs">
      <span class="k">Fill:</span><span>N/A</span>
      <span class="k">Stroke:</span><span>N/A</span>
    </div>
    <span class="o-lbl">O:</span>
    <div class="spin o-box off"><span class="val">100</span><span class="bt minus"></span><span class="bt plus"></span></div>
    <div class="vsep"></div>
    <svg class="ic eye" viewBox="0 0 40 40"><path d="M14 16L11 6M18 15l-1-9M22 15l1-9M26 16l3-10M10 18L6 12M30 18l4-6" stroke="#111" stroke-width="1.800"/><ellipse cx="20" cy="24" rx="15" ry="8.500" fill="#e8e8e8" stroke="#000" stroke-width="2.400"/><circle cx="20" cy="23.500" r="7" fill="#444" stroke="#000" stroke-width="2"/><circle cx="18" cy="21" r="2" fill="#fff"/></svg>
    <svg class="ic lock-st" viewBox="0 0 40 40"><path d="M18 17V8a6 6 0 0 1 11-3l3 3" fill="none" stroke="#000" stroke-width="2.200"/><path d="M9 16l19-2 3 22-20 2z" fill="url(#gLockOpen)" stroke="#000" stroke-width="2"/><circle cx="20" cy="23" r="2.400"/><path d="M19 24h2.400l.8 5h-3.600z"/></svg>
    <div class="layer"><span>•Layer 1</span><i></i></div>
    <p class="msg">No objects selected. Click, Shift+click, Alt+scroll mouse on top of<br>objects, or drag around objects to select.</p>
    <div class="vsep coords-sep"></div>
    <div class="coords"><span>X:</span><span class="v">178.24</span><span>Y:</span><span class="v">62.72</span></div>
    <span class="z-lbl">Z:</span>
    <div class="spin z-box"><span class="val">64%</span><span class="bt minus"></span><span class="bt plus"></span></div>
    <span class="r-lbl">R:</span>
    <div class="spin r-box"><span class="val">0.00°</span><span class="bt minus"></span><span class="bt plus"></span></div>
  </footer>

  <section class="dialog">
    <header class="dlg-title">
      <span>Dot Grid</span>
      <span class="dlg-close"><svg viewBox="0 0 16 16"><path d="M2 2l12 12M14 2L2 14" stroke="#fff" stroke-width="2.400"/></svg></span>
    </header>
    <div class="dlg-form">
      <div class="row"><label>Dot Diameter (mm):</label><div class="spin dlg"><span class="val">0.6</span><span class="bt minus"></span><span class="bt plus"></span></div></div>
      <div class="row"><label>Row Spacing (mm):</label><div class="spin dlg"><span class="val">5.0</span><span class="bt minus"></span><span class="bt plus"></span></div></div>
      <div class="row"><label class="tight">Column Spacing (mm):</label><div class="spin dlg"><span class="val">5.0</span><span class="bt minus"></span><span class="bt plus"></span></div></div>
      <div class="row"><label>Number of Columns:</label><div class="spin dlg big"><span class="val">36</span><span class="bt minus"></span><span class="bt plus"></span></div></div>
      <div class="row"><label>Number of Rows:</label><div class="spin dlg big focus"><span class="val"><i class="caret"></i>54</span><span class="bt minus"></span><span class="bt plus"></span></div></div>
    </div>
    <div class="dlg-rule"></div>
    <div class="live">
      <span class="check"><svg viewBox="0 0 32 32"><path d="M8 16l6 6 11-11" fill="none" stroke="#fff" stroke-width="3.400"/></svg></span>
      <span>Live preview</span>
    </div>
    <div class="dlg-btns"><button type="button">Close</button><button type="button">Apply</button></div>
  </section>

</div>

</body>
</html>
```

FILE: styles.css
```css
html, body {
    margin: 0;
    padding: 0;
}

body {
    width: 2614px;
    height: 2624px;
    overflow: hidden;
    background-color: #f4f4f4;
    font-family: "Noto Sans", "Open Sans", sans-serif;
    font-size: 29px;
    color: #a09e9b;
}

.defs {
    display: block;
    width: 0;
    height: 0;
}

.window {
    position: relative;
    display: flex;
    flex-direction: column;
    width: 2604px;
    height: 2615px;
    margin: 4px 0 0 2px;
    background-color: #f6f6f6;
    border-radius: 12px 12px 0 0;
    box-shadow: 0 0 0 1px #a8a8a8, 1px 1px 3px rgba(0, 0, 0, 0.4);
}

.ic {
    display: block;
    width: 40px;
    height: 40px;
    flex: none;
    overflow: visible;
}

.ic-t {
    font-family: "Liberation Serif", serif;
    font-weight: bold;
    font-size: 48px;
    text-anchor: middle;
    fill: #000;
}

.ic-a {
    font-family: "Liberation Sans", sans-serif;
    font-weight: bold;
    font-size: 54px;
    stroke: #000;
    stroke-width: 1.5px;
}

.ic-a-sm {
    font-family: "Liberation Sans", sans-serif;
    font-weight: bold;
    font-size: 35px;
    fill: #111;
    stroke: #000;
    stroke-width: 1px;
}

/* title bar */
.titlebar {
    position: relative;
    display: flex;
    align-items: center;
    justify-content: center;
    height: 75px;
    flex: none;
    background-color: #3d3c3a;
    border-radius: 12px 12px 0 0;
}

.wintitle {
    color: #fff;
    font-weight: bold;
    font-size: 28px;
}

.winbtns {
    position: absolute;
    top: 0;
    right: 0;
    bottom: 0;
    display: flex;
    align-items: center;
}

.wb-min {
    width: 16px;
    height: 2px;
    margin: 9px 52px 0 0;
    background-color: #aaa;
}

.wb-max {
    width: 12px;
    height: 12px;
    margin: 0 41px 0 0;
    border: 2px solid #aaa;
}

.wb-close {
    display: flex;
    align-items: center;
    justify-content: center;
    width: 37px;
    height: 37px;
    margin-right: 17px;
    border-radius: 50%;
    background-color: #646462;
}

.wb-x {
    width: 18px;
    height: 18px;
}

/* menu */
.menubar {
    display: flex;
    align-items: center;
    height: 48px;
    flex: none;
    padding-left: 1.5px;
    border-bottom: 2px solid #e2e2e2;
}

.menubar span {
    padding: 0 16.5px;
}

/* toolbars */
.toolbar {
    display: flex;
    align-items: center;
    height: 83px;
    flex: none;
    padding-left: 7px;
}

.toolbar.ctrl {
    height: 85px;
}

.tb {
    display: flex;
    align-items: center;
    justify-content: center;
    flex: none;
    width: 74.25px;
    height: 68px;
}

.sep {
    flex: none;
    width: 27.25px;
    height: 68px;
    background: linear-gradient(#e0e0e0, #e0e0e0) center / 2px 100% no-repeat;
}

.lbl {
    flex: none;
    text-align: right;
    padding-right: 7px;
}

.off {
    color: #cfcfcf;
}

.lbl-x { width: 33.25px; }
.lbl-y { width: 39px; }
.lbl-w { width: 48px; }

.spin {
    display: flex;
    flex: none;
    height: 67px;
    box-sizing: border-box;
    background-color: #fff;
    border: 2px solid #c8c8c8;
    border-radius: 8px;
    color: #111;
    font-size: 29px;
    --mark: #555;
}

.spin .val {
    flex: 1;
    display: flex;
    align-items: center;
    padding-left: 17px;
}

.bt {
    flex: none;
    width: 70px;
    border-left: 2px solid #ececec;
    box-sizing: border-box;
    background-repeat: no-repeat;
    background-position: center;
}

.minus {
    background-image: linear-gradient(var(--mark), var(--mark));
    background-size: 20px 2px;
}

.plus {
    background-image: linear-gradient(var(--mark), var(--mark)), linear-gradient(var(--mark), var(--mark));
    background-size: 22px 2px, 2px 22px;
}

.spin.off {
    background-color: #fafafa;
    border-color: #d6d6d6;
    color: #cfcfcf;
    --mark: #e4e4e4;
}

.wide {
    width: 350px;
}

.wide .val {
    padding-left: 15px;
}

.w-box {
    width: 343px;
}

.lock-aff {
    margin-left: 23px;
}

.more {
    width: 0;
    height: 0;
    margin-left: auto;
    margin-right: 31px;
    border-left: 10px solid transparent;
    border-right: 10px solid transparent;
    border-top: 11px solid #a0a0a0;
}

/* workspace */
.workspace {
    display: flex;
    flex: none;
    height: 2182px;
}

.toolbox {
    display: flex;
    flex-direction: column;
    align-items: flex-start;
    flex: none;
    box-sizing: border-box;
    width: 107px;
    padding: 6.6px 0 0 9px;
}

.tool {
    display: flex;
    align-items: center;
    justify-content: center;
    flex: none;
    box-sizing: border-box;
    width: 86px;
    height: 68.75px;
    border: 2px solid transparent;
}

.tool .ic {
    margin-left: -2px;
}

.tool.on, .snap.on {
    background-color: #e2e2e2;
    border-color: #d2d2d2;
    border-radius: 8px;
    background-clip: padding-box;
}

.tool-sep {
    flex: none;
    width: 86px;
    height: 25px;
    background: linear-gradient(#e0e0e0, #e0e0e0) center / 100% 2px no-repeat;
}

.center {
    display: grid;
    grid-template-columns: 35px 2307px 36px;
    grid-template-rows: 52px 2078px 52px;
    flex: none;
}

.corner {
    display: flex;
    align-items: center;
    justify-content: center;
    box-sizing: border-box;
    border: 2px solid #d6d6d6;
    border-radius: 8px;
    height: 51px;
}

.lock-sm {
    width: 32px;
    height: 32px;
    overflow: visible;
}

.one {
    width: 22px;
    height: 24px;
    box-sizing: border-box;
    border: 2px solid #999;
    border-radius: 4px;
    color: #999;
    font-size: 17px;
    line-height: 20px;
    text-align: center;
}

.hruler {
    position: relative;
    display: flex;
    overflow: hidden;
    padding-left: 49.75px;
    color: #8e9eab;
    font-size: 18px;
    line-height: 24px;
    background:
        linear-gradient(#999, #999) bottom / 100% 2px no-repeat,
        repeating-linear-gradient(90deg, transparent 0 49px, #999 49px 51px, transparent 51px 121.25px) bottom / 100% 51px no-repeat,
        repeating-linear-gradient(90deg, transparent 0 110px, #999 110px 112px, transparent 112px 121.25px) bottom / 100% 27px no-repeat,
        repeating-linear-gradient(90deg, transparent 0 1px, #999 1px 3px, transparent 3px 12.125px) bottom / 100% 15px no-repeat;
}

.hruler span {
    flex: none;
    box-sizing: border-box;
    width: 121.25px;
    padding-left: 4px;
}

.hmark {
    position: absolute;
    left: 1510px;
    bottom: 2px;
    width: 0;
    height: 0;
    border-left: 8px solid transparent;
    border-right: 8px solid transparent;
    border-top: 9px solid #888;
}

.vruler {
    position: relative;
    display: flex;
    flex-direction: column;
    overflow: hidden;
    padding-top: 80.5px;
    color: #8e9eab;
    font-size: 18px;
    line-height: 15.5px;
    background:
        linear-gradient(#999, #999) right / 2px 100% no-repeat,
        repeating-linear-gradient(180deg, transparent 0 79.75px, #999 79.75px 81.75px, transparent 81.75px 121.25px) right / 100% 100% no-repeat,
        repeating-linear-gradient(180deg, transparent 0 19px, #999 19px 21px, transparent 21px 121.25px) right / 19px 100% no-repeat,
        repeating-linear-gradient(180deg, transparent 0 7px, #999 7px 9px, transparent 9px 12.125px) right / 11px 100% no-repeat;
}

.vruler > div {
    flex: none;
    box-sizing: border-box;
    width: 34px;
    height: 121.25px;
    padding-top: 1px;
    text-align: center;
    white-space: pre;
}

.vmark {
    position: absolute;
    top: 617px;
    right: 2px;
    width: 0;
    height: 0;
    border-top: 8px solid transparent;
    border-bottom: 8px solid transparent;
    border-left: 9px solid #888;
}

.canvas {
    position: relative;
    overflow: hidden;
    background-color: #fff;
}

.page {
    position: absolute;
    left: 655px;
    top: 322px;
    width: 1018px;
    height: 1439px;
    box-sizing: border-box;
    border: 2px solid #666;
    box-shadow: 4px 4px 0 #555;
}

.dots {
    position: absolute;
    left: 642.6px;
    top: 309.6px;
}

.vscroll {
    background-color: #eee;
}

.vthumb {
    width: 12px;
    height: 1052px;
    margin: 510px 0 0 12px;
    border-radius: 6px;
    background-color: #cfcfcf;
}

.hscroll {
    grid-column: 1 / 3;
    margin-left: 35px;
    padding-top: 20px;
    box-sizing: border-box;
    background-color: #eee;
}

.hthumb {
    width: 1596px;
    height: 12px;
    margin-left: 349px;
    border-radius: 6px;
    background-color: #cfcfcf;
}

.cms {
    display: flex;
    align-items: center;
    justify-content: center;
    box-sizing: border-box;
    border: 2px solid #d0d0d0;
    border-radius: 8px;
}

.wheel {
    width: 29px;
    height: 32px;
}

.snapbar {
    display: flex;
    flex-direction: column;
    align-items: flex-start;
    flex: none;
    width: 117px;
    padding: 6px 0 0 40px;
    box-sizing: border-box;
}

.snap {
    display: flex;
    align-items: center;
    justify-content: center;
    flex: none;
    box-sizing: border-box;
    width: 72px;
    height: 70px;
    border: 2px solid transparent;
}

.snap-sep {
    flex: none;
    width: 72px;
    height: 28px;
    background: linear-gradient(#e0e0e0, #e0e0e0) center / 100% 2px no-repeat;
}

/* palette */
.palette-row {
    display: flex;
    flex: none;
    height: 70px;
    padding-left: 3px;
}

.palette-wrap {
    display: flex;
    flex-direction: column;
    width: 2528px;
}

.swatches {
    display: flex;
    height: 42px;
    margin-top: 2px;
    border-bottom: 2px solid #ccc;
}

.sw {
    flex: none;
    width: 38px;
}

.sw-x {
    display: block;
    width: 38px;
    height: 42px;
}

.sw-none {
    background-color: #fff;
}

.sw-short {
    width: 16px;
}

.sw-tail {
    width: 4px;
}

.pal-scroll {
    flex: 1;
    padding-top: 6px;
    background-color: #eee;
}

.pal-thumb {
    width: 376px;
    height: 12px;
    margin-left: 6px;
    border-radius: 6px;
    background-color: #cfcfcf;
}

.pal-arrow {
    width: 0;
    height: 0;
    margin: 26px 0 0 26px;
    border-top: 10px solid transparent;
    border-bottom: 10px solid transparent;
    border-right: 10px solid #a0a0a0;
}

/* status bar */
.status {
    display: flex;
    align-items: center;
    flex: none;
    height: 70px;
}

.fs {
    display: grid;
    grid-template-columns: 100px 1fr;
    column-gap: 58px;
    width: 208px;
    flex: none;
    line-height: 35px;
}

.fs .k {
    text-align: right;
}

.o-lbl {
    flex: none;
    width: 142px;
    text-align: right;
}

.o-box {
    width: 234px;
    margin-left: 6px;
}

.status .val {
    padding-left: 17px;
}

.vsep {
    flex: none;
    width: 2px;
    height: 68px;
    margin-left: 5px;
    background-color: #e0e0e0;
}

.eye {
    margin-left: 18px;
}

.lock-st {
    margin-left: 32px;
}

.layer {
    display: flex;
    align-items: center;
    justify-content: space-between;
    flex: none;
    box-sizing: border-box;
    width: 178px;
    height: 67px;
    margin-left: 17px;
    padding: 0 24px 0 24px;
    border: 2px solid #d0d0d0;
    border-radius: 8px;
    font-weight: bold;
    font-size: 24px;
}

.layer i {
    width: 0;
    height: 0;
    border-left: 10px solid transparent;
    border-right: 10px solid transparent;
    border-top: 11px solid #a0a0a0;
}

.msg {
    flex: none;
    width: 905px;
    margin: 0 0 0 45px;
    line-height: 35px;
    white-space: nowrap;
}

.coords {
    display: grid;
    grid-template-columns: 1fr auto;
    flex: none;
    width: 141px;
    margin-left: 19px;
    line-height: 35px;
}

.coords .v {
    text-align: right;
}

.z-lbl {
    flex: none;
    width: 44px;
    margin-left: 21px;
}

.z-box {
    width: 198px;
    color: #333;
}

.r-lbl {
    flex: none;
    width: 68px;
    padding-right: 22px;
    box-sizing: border-box;
    text-align: right;
}

.r-box {
    width: 214px;
    color: #333;
}

.z-box, .r-box {
    background-color: #fcfcfc;
    border-color: #d0d0d0;
    --mark: #a8a8a8;
}

.status .z-box .val {
    padding-left: 19px;
}

.status .r-box .val {
    padding-left: 25px;
}

.z-box .minus, .r-box .minus {
    width: 42px;
}

.z-box .plus, .r-box .plus {
    width: 46px;
}

/* dot grid dialog */
.dialog {
    position: absolute;
    left: 1711px;
    top: 937px;
    display: flex;
    flex-direction: column;
    box-sizing: border-box;
    width: 588px;
    height: 666px;
    background-color: #f6f6f6;
    border-radius: 10px 10px 0 0;
    box-shadow: 0 0 0 1px #777, 0 3px 10px rgba(0, 0, 0, 0.45);
    color: #3d3d3d;
    font-size: 28.2px;
}

.dlg-title {
    position: relative;
    display: flex;
    align-items: center;
    justify-content: center;
    flex: none;
    height: 75px;
    background-color: #323030;
    border-radius: 10px 10px 0 0;
    color: #fff;
    font-weight: bold;
}

.dlg-close {
    position: absolute;
    right: 18px;
    top: 19px;
    display: flex;
    align-items: center;
    justify-content: center;
    width: 37px;
    height: 37px;
    border-radius: 50%;
    background-color: #e95420;
}

.dlg-close svg {
    width: 16px;
    height: 16px;
}

.dlg-form {
    display: flex;
    flex-direction: column;
    gap: 9px;
    padding: 24px 24px 0 24px;
}

.row {
    display: flex;
    align-items: center;
    justify-content: space-between;
    height: 67px;
}

.row label {
    padding-bottom: 2px;
}

.row .tight {
    letter-spacing: -0.2px;
}

.spin.dlg {
    width: 236px;
}

.spin.dlg.big {
    width: 240px;
}

.spin.focus {
    border-color: #eccfc8;
}

.caret {
    display: block;
    width: 2px;
    height: 33px;
    margin-right: -2px;
    background-color: #222;
}

.dlg-rule {
    flex: none;
    height: 2px;
    margin: 28px 5px 0;
    background-color: #e2e2e2;
}

.live {
    display: flex;
    align-items: center;
    gap: 8px;
    height: 38px;
    margin: 31px 0 0 32px;
}

.check {
    display: block;
    width: 32px;
    height: 32px;
    border-radius: 6px;
    background-color: #924d8b;
}

.check svg {
    display: block;
}

.dlg-btns {
    display: flex;
    justify-content: flex-end;
    gap: 10px;
    margin: 25px 5px 0 0;
}

.dlg-btns button {
    width: 168px;
    height: 66px;
    padding: 0 0 3px;
    background-color: #fff;
    border: 2px solid #cfcfcf;
    border-radius: 8px;
    color: #3d3d3d;
    font: inherit;
}
```
